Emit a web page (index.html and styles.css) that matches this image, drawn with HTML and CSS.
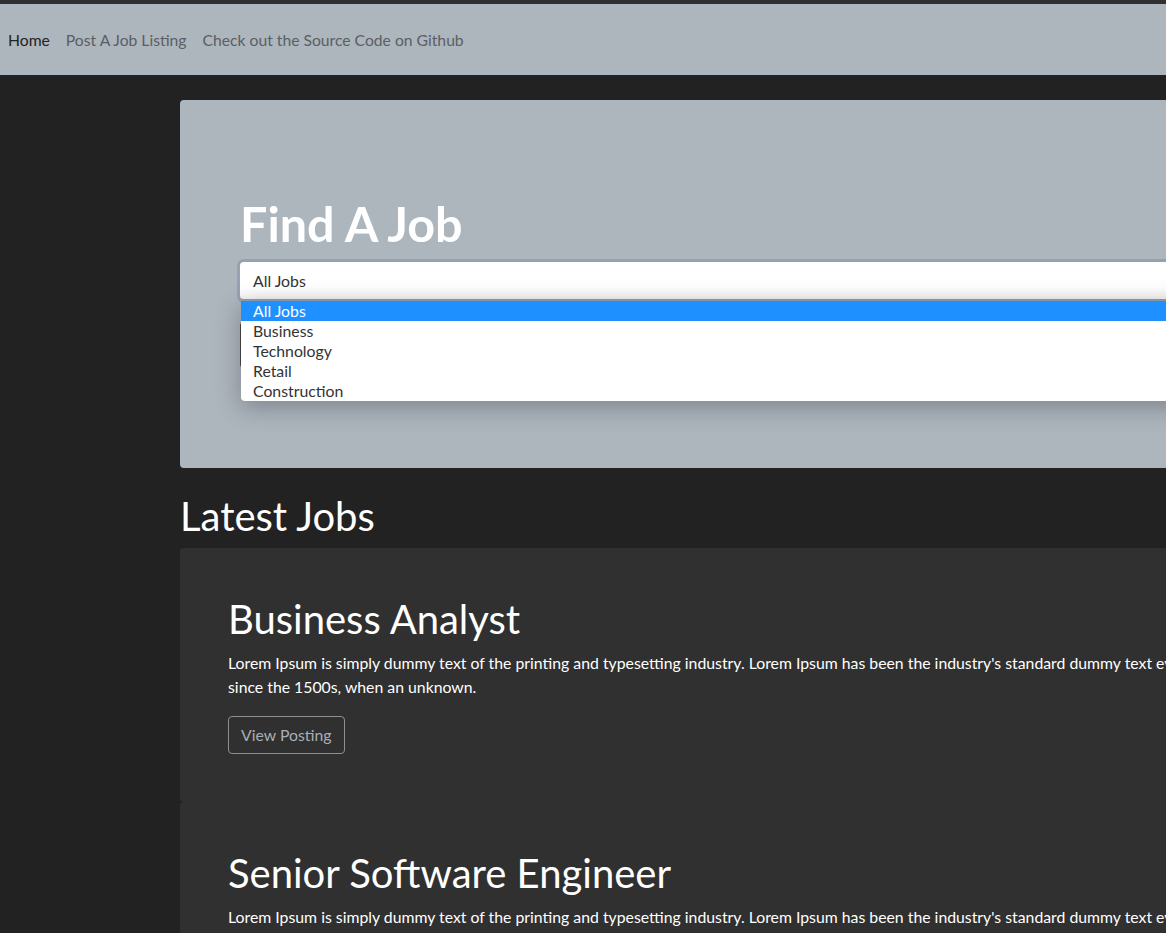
FILE: index.html
```html
<!DOCTYPE html>
<html lang="en">
<head>
<meta charset="utf-8">
<title>Find A Job</title>
<link rel="stylesheet" href="styles.css">
</head>
<body>
<div class="topstrip"></div>
<nav class="navbar">
  <a class="nav-link active" href="#">Home</a>
  <a class="nav-link" href="#">Post A Job Listing</a>
  <a class="nav-link" href="#">Check out the Source Code on Github</a>
</nav>
<main class="container">
  <section class="jumbotron">
    <h1 class="jumbo-title">Find A Job</h1>
    <div class="select-wrap">
      <div class="select">All Jobs</div>
      <ul class="dropdown">
        <li class="opt selected">All Jobs</li>
        <li class="opt">Business</li>
        <li class="opt">Technology</li>
        <li class="opt">Retail</li>
        <li class="opt">Construction</li>
      </ul>
    </div>
    <button class="search-btn" aria-label="Search"></button>
  </section>
  <h2 class="section-title">Latest Jobs</h2>
  <article class="card">
    <h3 class="card-title">Business Analyst</h3>
    <p class="card-text">Lorem Ipsum is simply dummy text of the printing and typesetting industry. Lorem Ipsum has been the industry's standard dummy text ever since the 1500s, when an unknown.</p>
    <a class="btn-outline" href="#">View Posting</a>
  </article>
  <article class="card">
    <h3 class="card-title">Senior Software Engineer</h3>
    <p class="card-text">Lorem Ipsum is simply dummy text of the printing and typesetting industry. Lorem Ipsum has been the industry's standard dummy text ever since the 1500s, when an unknown.</p>
    <a class="btn-outline" href="#">View Posting</a>
  </article>
</main>
</body>
</html>
```

FILE: styles.css
```css
html, body {
  margin: 0;
  padding: 0;
}
body {
  background: #222222;
  font-family: Lato, "Open Sans", sans-serif;
  font-size: 15.8px;
  line-height: 1.5;
  color: #ffffff;
  overflow: hidden;
  width: 1500px;
}
.topstrip {
  height: 4px;
  background: #303030;
}
.navbar {
  height: 71px;
  background: #adb5bd;
  display: flex;
  align-items: center;
  padding: 0 8px;
  gap: 16px;
  box-sizing: border-box;
}
.nav-link {
  color: #5a5f64;
  text-decoration: none;
  font-size: 15.7px;
  line-height: 24px;
}
.nav-link.active {
  color: #222222;
}
.container {
  width: 1080px;
  margin-left: 180px;
  padding-top: 25px;
}
.jumbotron {
  background: #adb5bd;
  border-radius: 4px;
  padding: 95px 60px 0 60px;
  height: 368px;
  box-sizing: border-box;
}
.jumbo-title {
  margin: 0 0 9px 0;
  font-size: 48.5px;
  line-height: 57.6px;
  font-weight: 700;
  color: #ffffff;
}
.select-wrap {
  position: relative;
  height: 38px;
}
.select {
  height: 38px;
  box-sizing: border-box;
  border-radius: 4px;
  box-shadow: 0 0 0 3px #94a2b1;
  border-bottom: 1px solid #9a9a9a;
  padding: 7px 13px;
  color: #333333;
  font-size: 15.8px;
  line-height: 24px;
  background: linear-gradient(#ffffff 70%, #f3f3f3);
}
.dropdown {
  position: absolute;
  left: 1px;
  top: 39px;
  right: 0;
  margin: 0;
  padding: 0;
  list-style: none;
  background: #ffffff;
  border-radius: 0 0 4px 4px;
  box-shadow: 0 6px 24px rgba(40, 40, 50, 0.35);
  z-index: 5;
  overflow: hidden;
}
.opt {
  height: 20px;
  line-height: 20px;
  padding: 0 12px;
  color: #333333;
  font-size: 15.8px;
}
.opt.selected {
  background: #1e90ff;
  color: #ffffff;
}
.search-btn {
  display: block;
  margin-top: 22px;
  height: 46px;
  width: 100px;
  border: none;
  border-radius: 4px;
  background: #444444;
}
.section-title {
  margin: 24px 0 8px 0;
  font-size: 40px;
  line-height: 48px;
  font-weight: 400;
  color: #ffffff;
}
.card {
  background: #303030;
  border-radius: 4px;
  padding: 47px 48px 48px 48px;
  display: flex;
  flex-direction: column;
  align-items: flex-start;
}
.card-title {
  margin: 0 0 8px 0;
  font-size: 40px;
  line-height: 48px;
  font-weight: 400;
  color: #ffffff;
}
.card-text {
  margin: 0 0 17px 0;
  font-size: 15.8px;
  line-height: 24px;
  color: #ffffff;
}
.btn-outline {
  display: block;
  padding: 6px 12px;
  border: 1px solid #8a8f94;
  border-radius: 4px;
  color: #a9afb5;
  text-decoration: none;
  font-size: 15.8px;
  line-height: 24px;
}
```
